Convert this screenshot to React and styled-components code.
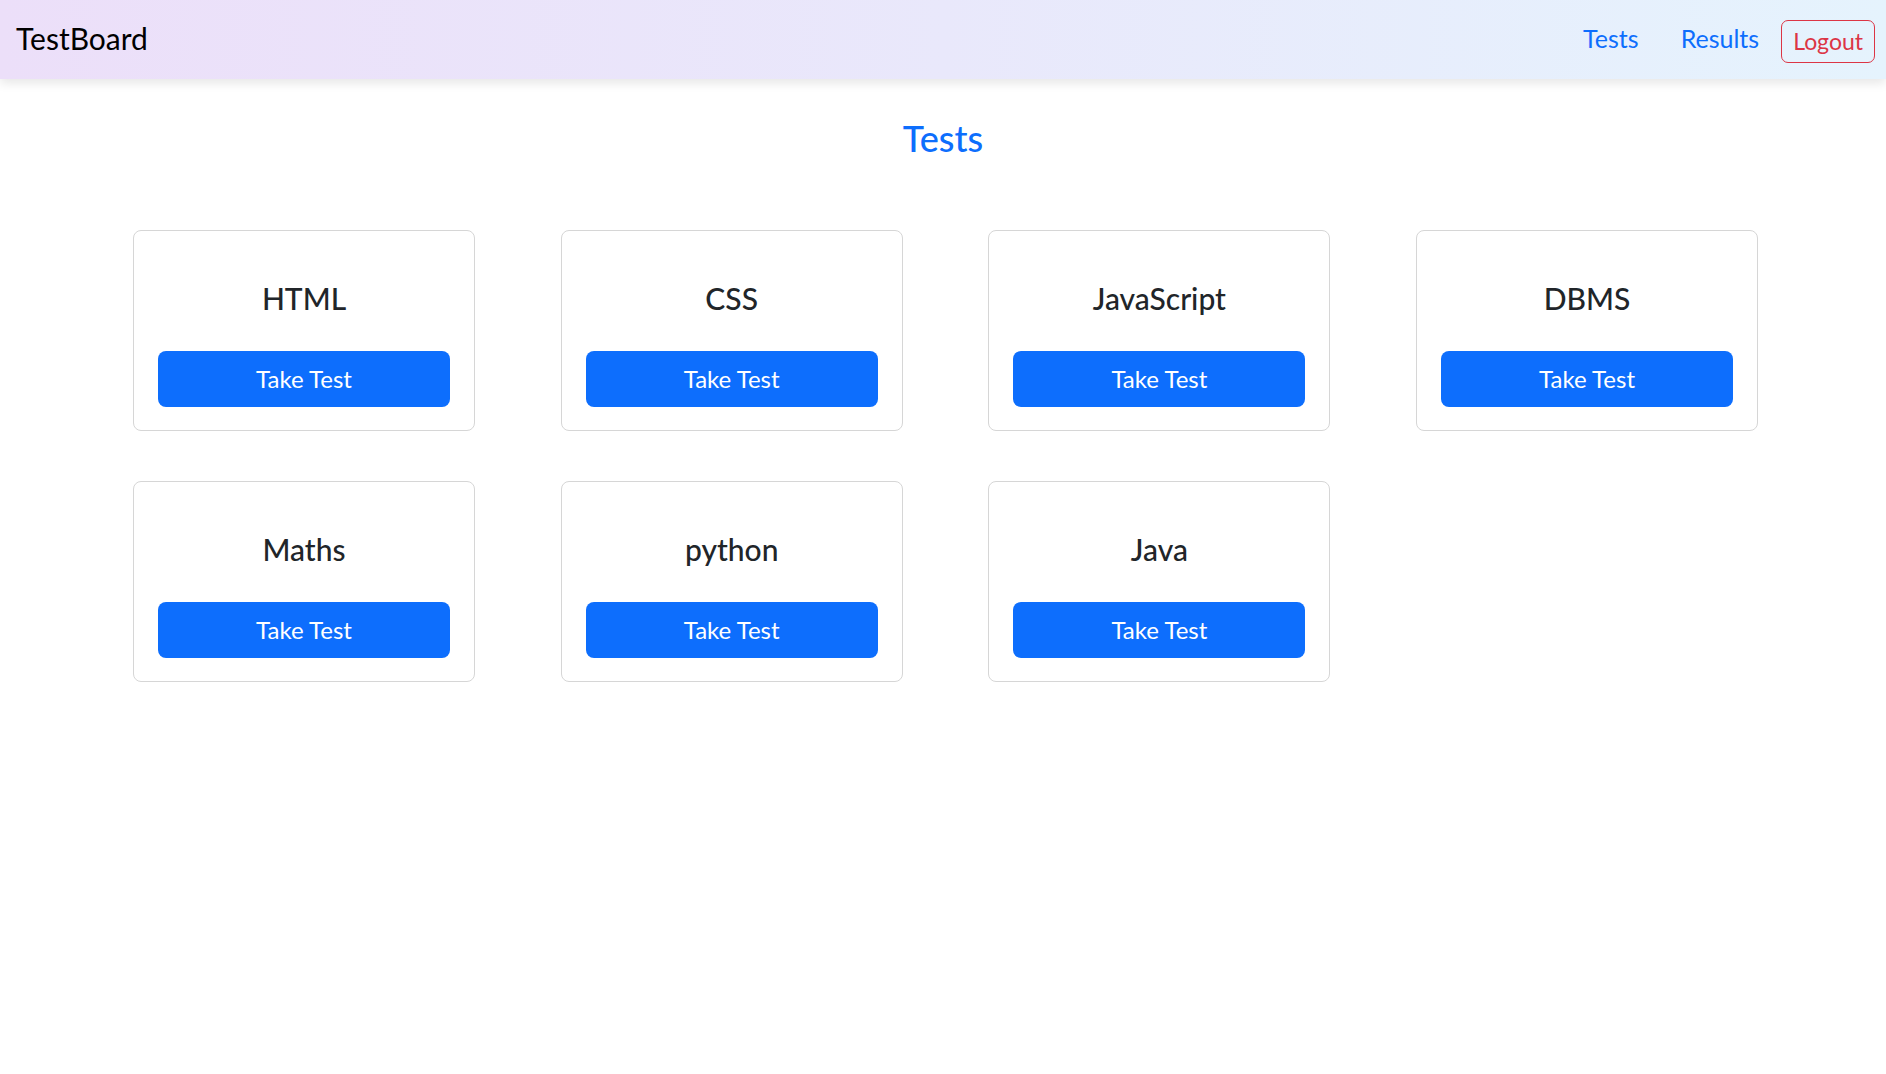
import React from "react";
import styled, { createGlobalStyle } from "styled-components";

const GlobalStyle = createGlobalStyle`
  * {
    box-sizing: border-box;
  }

  body {
    margin: 0;
    background: #ffffff;
    font-family: Lato, "Open Sans", sans-serif;
    color: #212529;
  }
`;

const Navbar = styled.nav`
    height: 79px;
    display: flex;
    align-items: center;
    justify-content: space-between;
    padding: 0 11px 0 16px;
    background: linear-gradient(90deg, #ecdff9 0%, #e9e8fb 50%, #e5f3fd 100%);
    box-shadow: 0 4px 10px rgba(0, 0, 0, 0.1);
    position: relative;
    z-index: 2;
`;

const Brand = styled.a`
    font-size: 30px;
    line-height: 1.2;
    color: #000;
    text-decoration: none;
    padding-bottom: 4px;
`;

const NavLinks = styled.div`
    display: flex;
    align-items: center;
`;

const NavLink = styled.a`
    font-size: 25px;
    line-height: 1.2;
    color: #0d6efd;
    text-decoration: none;
    padding: 0 12px 4px;
    margin-right: ${(p) => (p.$last ? "10px" : "18px")};
    cursor: pointer;
`;

const LogoutButton = styled.button`
    font-family: inherit;
    font-size: 23px;
    line-height: 1.2;
    color: #dc3545;
    background: transparent;
    border: 1px solid #dc3545;
    border-radius: 7px;
    padding: 7px 11px;
    margin-top: 4px;
    min-width: 92px;
    cursor: pointer;
`;

const Page = styled.main`
    padding-top: 38px;
`;

const Heading = styled.h2`
    margin: 0;
    font-size: 36px;
    font-weight: 500;
    line-height: 1.2;
    text-align: center;
    color: #0d6efd;
`;

const Grid = styled.div`
    width: 1625px;
    margin: 70px 0 0 133px;
    display: grid;
    grid-template-columns: repeat(4, 342px);
    column-gap: 85.7px;
    row-gap: 50px;
`;

const Card = styled.div`
    background: #fff;
    border: 1px solid #d6d6d6;
    border-radius: 8px;
    padding: 0 24px 23px;
    display: flex;
    flex-direction: column;
    text-align: center;
`;

const CardTitle = styled.h3`
    margin: 49px 0 35px;
    font-size: 30px;
    font-weight: 500;
    line-height: 1.2;
    color: #212529;
`;

const TakeButton = styled.button`
    height: 56px;
    width: 100%;
    border: none;
    border-radius: 8px;
    background: #0d6efd;
    color: #fff;
    font-family: inherit;
    font-size: 24px;
    line-height: 1.2;
    cursor: pointer;
`;

const tests = ["HTML", "CSS", "JavaScript", "DBMS", "Maths", "python", "Java"];

export default function App() {
  return (
    <>
      <GlobalStyle />
      <Navbar>
        <Brand>TestBoard</Brand>
        <NavLinks>
          <NavLink>Tests</NavLink>
          <NavLink $last>Results</NavLink>
          <LogoutButton>Logout</LogoutButton>
        </NavLinks>
      </Navbar>
      <Page>
        <Heading>Tests</Heading>
        <Grid>
          {tests.map((t) => (
            <Card key={t}>
              <CardTitle>{t}</CardTitle>
              <TakeButton>Take Test</TakeButton>
            </Card>
          ))}
        </Grid>
      </Page>
    </>
  );
}
